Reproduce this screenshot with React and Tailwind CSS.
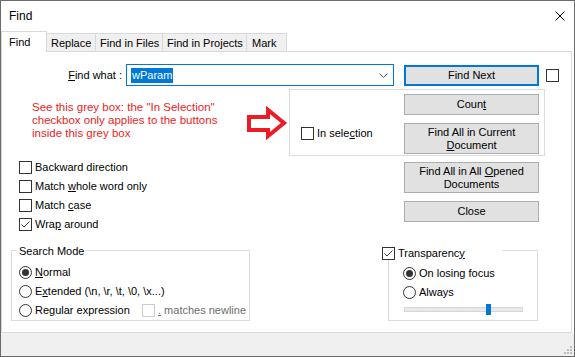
import React from "react";

function Checkbox({ checked, disabled }) {
  return (
    <span
      className={
        disabled
          ? "w-[13px] h-[13px] shrink-0 border border-[#cccccc] bg-white flex items-center justify-center"
          : "w-[13px] h-[13px] shrink-0 border border-[#333333] bg-white flex items-center justify-center"
      }
    >
      {checked && (
        <svg width="11" height="11" viewBox="0 0 11 11">
          <path d="M1.5 5.5 L4 8 L9.5 2.5" fill="none" stroke="#333333" strokeWidth="1" />
        </svg>
      )}
    </span>
  );
}

function Radio({ checked }) {
  return (
    <span className="w-[13px] h-[13px] shrink-0 rounded-full border border-[#333333] bg-white flex items-center justify-center">
      {checked && <span className="w-[7px] h-[7px] rounded-full bg-[#333333]" />}
    </span>
  );
}

function Btn({ children, h2 }) {
  return (
    <div
      className={
        h2
          ? "w-[135px] h-[31px] bg-[#e1e1e1] border border-[#adadad] flex items-center justify-center text-center leading-[13px]"
          : "w-[135px] h-[21px] bg-[#e1e1e1] border border-[#adadad] flex items-center justify-center text-center leading-[13px]"
      }
    >
      <span>{children}</span>
    </div>
  );
}

function Item({ children, checked }) {
  return (
    <div className="h-[13px] flex items-center gap-[3px] whitespace-nowrap">
      <Checkbox checked={checked} />
      <span>{children}</span>
    </div>
  );
}

function RItem({ children, checked }) {
  return (
    <div className="h-[13px] flex items-center gap-[3px] whitespace-nowrap">
      <Radio checked={checked} />
      <span>{children}</span>
    </div>
  );
}

export default function App() {
  return (
    <div className="w-[575px] h-[357px] border border-[#6b6b6b] bg-white flex flex-col font-['Liberation_Sans',Arial,sans-serif] text-[11px] text-black overflow-hidden">
      {/* title bar */}
      <div className="h-[30px] shrink-0 flex items-center justify-between pl-[8px] pr-[9px]">
        <span className="text-[12px]">Find</span>
        <svg width="10" height="10" viewBox="0 0 10 10">
          <path d="M0.5 0.5 L9.5 9.5 M9.5 0.5 L0.5 9.5" stroke="#000000" strokeWidth="1" />
        </svg>
      </div>

      {/* tabs */}
      <div className="h-[20px] shrink-0 flex items-end">
        <div className="relative z-10 -mb-px h-[21px] w-[46px] bg-white border-l border-t border-r border-[#d9d9d9] flex items-center pl-[7px]">
          Find
        </div>
        <div className="h-[18px] w-[49px] bg-[#f0f0f0] border-t border-r border-[#d9d9d9] flex items-center pl-[4px] pt-[1px] whitespace-nowrap">
          Replace
        </div>
        <div className="h-[18px] w-[67px] bg-[#f0f0f0] border-t border-r border-[#d9d9d9] flex items-center pl-[4px] pt-[1px] whitespace-nowrap">
          Find in Files
        </div>
        <div className="h-[18px] w-[84px] bg-[#f0f0f0] border-t border-r border-[#d9d9d9] flex items-center pl-[4px] pt-[1px] whitespace-nowrap">
          Find in Projects
        </div>
        <div className="h-[18px] w-[40px] bg-[#f0f0f0] border-t border-r border-[#d9d9d9] flex items-center pl-[5px] pt-[1px] whitespace-nowrap">
          Mark
        </div>
      </div>

      {/* panel */}
      <div className="w-[571px] h-[282px] shrink-0 border border-[#d9d9d9] flex flex-col">
        {/* row 1 */}
        <div className="mt-[12px] h-[22px] flex items-center">
          <div className="w-[120px] text-right whitespace-nowrap">
            <u>F</u>ind what :
          </div>
          <div className="ml-[4px] w-[268px] h-[22px] border border-[#0078d7] flex items-center justify-between pl-[4px] pr-[5px]">
            <span className="bg-[#0078d7] text-white h-[15px] leading-[15px] px-[1px]">wParam</span>
            <svg width="9" height="5" viewBox="0 0 9 5">
              <path d="M0.5 0.5 L4.5 4.5 L8.5 0.5" fill="none" stroke="#555555" strokeWidth="1" />
            </svg>
          </div>
          <div className="ml-[10px] self-start mt-[1px] w-[135px] h-[21px] bg-[#e1e1e1] border-2 border-[#0078d7] flex items-center justify-center">
            Find Next
          </div>
          <div className="ml-[7px]">
            <Checkbox />
          </div>
        </div>

        {/* row 2 */}
        <div className="mt-[3px] h-[67px] flex">
          <div className="w-[287px] flex items-start">
            <div className="w-[215px] shrink-0 pl-[30px] pt-[12px] text-[#ed1c24] text-[11.5px] leading-[13px] whitespace-nowrap">
              See this grey box: the "In Selection"
              <br />
              checkbox only applies to the buttons
              <br />
              inside this grey box
            </div>
            <svg className="ml-[28px] mt-[16px] shrink-0" width="44" height="36" viewBox="0 0 44 36">
              <path
                d="M4 12 L23 12 L23 5 L39 18 L23 31 L23 25 L4 25 Z"
                fill="#ffffff"
                stroke="#ed1c24"
                strokeWidth="4"
                strokeLinejoin="miter"
              />
            </svg>
          </div>
          <div className="w-[256px] h-[67px] border border-[#dcdcdc] flex">
            <div className="w-[114px] pl-[11px] pt-[37px]">
              <div className="h-[13px] flex items-center gap-[3px] whitespace-nowrap">
                <Checkbox />
                <span>
                  In sele<u>c</u>tion
                </span>
              </div>
            </div>
            <div className="flex flex-col pt-[4px] gap-[8px]">
              <Btn>
                Coun<u>t</u>
              </Btn>
              <Btn h2>
                Find All in Current
                <br />
                <u>D</u>ocument
              </Btn>
            </div>
          </div>
        </div>

        {/* row 3 */}
        <div className="mt-[5px] flex">
          <div className="w-[402px] pl-[17px] flex flex-col gap-[6px]">
            <Item>Backward direction</Item>
            <Item>
              Match <u>w</u>hole word only
            </Item>
            <Item>
              Match <u>c</u>ase
            </Item>
            <Item checked>
              Wra<u>p</u> around
            </Item>
          </div>
          <div className="flex flex-col pt-[1px] gap-[8px]">
            <Btn h2>
              Find All in All <u>O</u>pened
              <br />
              Documents
            </Btn>
            <Btn>Close</Btn>
          </div>
        </div>

        {/* row 4 */}
        <div className="mt-[19px] flex">
          <div className="ml-[9px] w-[239px] h-[71px] border border-[#dcdcdc] flex flex-col pl-[5px]">
            <div className="-mt-[7px] h-[14px] leading-[14px] px-[2px] bg-white w-fit whitespace-nowrap">
              Search Mode
            </div>
            <div className="mt-[8px] pl-[2px] flex flex-col gap-[6px]">
              <RItem checked>
                <u>N</u>ormal
              </RItem>
              <RItem>
                E<u>x</u>tended (\n, \r, \t, \0, \x...)
              </RItem>
              <div className="h-[13px] flex items-center whitespace-nowrap">
                <div className="w-[123px] flex items-center gap-[3px]">
                  <Radio />
                  <span>
                    Re<u>g</u>ular expression
                  </span>
                </div>
                <div className="flex items-center gap-[3px] text-[#6d6d6d]">
                  <Checkbox disabled />
                  <span>
                    <u>.</u> matches newline
                  </span>
                </div>
              </div>
            </div>
          </div>

          <div className="ml-[138px] w-[150px] h-[71px] border border-[#dcdcdc] flex flex-col">
            <div className="-mt-[5px] -ml-[7px] w-[120px] h-[14px] bg-white flex items-center gap-[3px] whitespace-nowrap">
              <Checkbox checked />
              <span>
                Transparenc<u>y</u>
              </span>
            </div>
            <div className="mt-[7px] pl-[14px] flex flex-col gap-[6px]">
              <RItem checked>On losing focus</RItem>
              <RItem>Always</RItem>
            </div>
            <div className="mt-[8px] ml-[15px] w-[119px] h-[5px] bg-[#e7eaea] border border-[#d6d6d6] relative">
              <div className="absolute left-[81px] -top-[4px] w-[5px] h-[11px] bg-[#0078d7]" />
            </div>
          </div>
        </div>
      </div>

      {/* bottom band */}
      <div className="h-[23px] shrink-0 bg-[#f0f0f0] flex justify-end items-end pr-[2px] pb-[2px]">
        <svg width="8" height="8" viewBox="0 0 8 8">
          <rect x="6" y="0" width="2" height="2" fill="#bcbcbc" />
          <rect x="3" y="3" width="2" height="2" fill="#bcbcbc" />
          <rect x="6" y="3" width="2" height="2" fill="#bcbcbc" />
          <rect x="0" y="6" width="2" height="2" fill="#bcbcbc" />
          <rect x="3" y="6" width="2" height="2" fill="#bcbcbc" />
          <rect x="6" y="6" width="2" height="2" fill="#bcbcbc" />
        </svg>
      </div>
    </div>
  );
}
